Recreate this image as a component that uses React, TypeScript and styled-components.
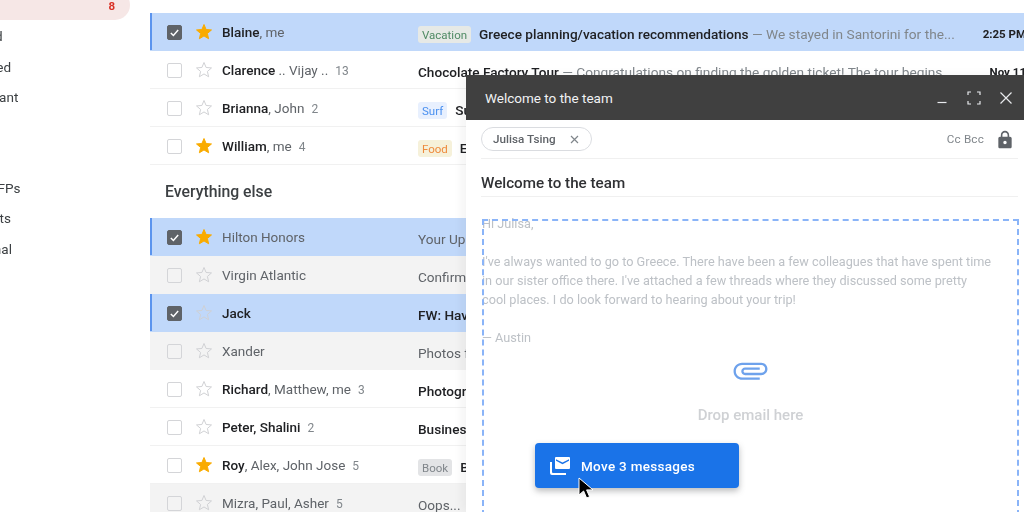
import React from 'react';
import styled, { createGlobalStyle } from 'styled-components';

const GlobalStyle = createGlobalStyle`
    html, body {
        margin: 0;
        height: 100%;
        background: #fff;
        overflow: hidden;
    }

    body {
        font-family: Roboto, "Liberation Sans", sans-serif;
        color: #202124;
    }
`;

const Page = styled.div`
    position: relative;
    display: flex;
    width: 1024px;
    height: 512px;
    overflow: hidden;
    filter: blur(0.35px);
`;

const Sidebar = styled.nav`
    flex: 0 0 130px;
    margin-right: 20px;
    margin-top: -10px;
    overflow: hidden;
    font-size: 13.5px;
    color: #3c4043;
`;

const InboxPill = styled.div`
    display: flex;
    align-items: flex-end;
    justify-content: flex-end;
    box-sizing: border-box;
    height: 30px;
    padding: 0 15px 7px 0;
    background: #f6e7e6;
    border-radius: 0 15px 15px 0;
    font-size: 11.5px;
    font-weight: 700;
    color: #d93025;
`;

const NavGroup = styled.div`
    padding-top: 1px;
    margin-bottom: 60px;
`;

const NavItem = styled.div`
    height: 30.5px;
    line-height: 30.5px;
    margin-left: -41px;
    white-space: nowrap;
`;

const Main = styled.main`
    flex: 1;
    min-width: 0;
    padding-top: 13px;
`;

const SectionTitle = styled.h2`
    display: flex;
    align-items: center;
    height: 53px;
    margin: 0;
    padding-left: 15px;
    font-size: 15.8px;
    font-weight: 500;
    color: #3c4043;
`;

const Row = styled.div<{ $tone: 'plain' | 'read' | 'selected' }>`
    display: flex;
    align-items: center;
    box-sizing: border-box;
    height: 38px;
    padding: 1px 0 0 17px;
    font-size: 13.5px;
    white-space: nowrap;
    background: ${({ $tone }) =>
        $tone === 'selected' ? '#c0d8fa' : $tone === 'read' ? '#f3f3f3' : '#fff'};
    border-bottom: 1px solid ${({ $tone }) => ($tone === 'plain' ? '#f1f1f1' : 'transparent')};
    box-shadow: ${({ $tone }) => ($tone === 'selected' ? 'inset 2px 0 0 #5b94ee' : 'none')};
`;

const Check = styled.span<{ $checked: boolean }>`
    display: flex;
    align-items: center;
    justify-content: center;
    box-sizing: border-box;
    flex: 0 0 15px;
    height: 15px;
    margin-right: 13px;
    border-radius: 2px;
    border: 1.5px solid ${({ $checked }) => ($checked ? '#5f6368' : '#d4d5d8')};
    background: ${({ $checked }) => ($checked ? '#5f6368' : 'transparent')};
`;

const StarIcon = styled.svg<{ $on: boolean }>`
    flex: 0 0 18px;
    width: 18px;
    height: 18px;
    margin-right: 9px;
    fill: ${({ $on }) => ($on ? '#f9ab00' : 'none')};
    stroke: ${({ $on }) => ($on ? '#f9ab00' : '#cfd0d3')};
    stroke-width: 1.3;
`;

const Sender = styled.span`
    flex: 0 0 196px;
    color: #5f6368;
`;

const Bold = styled.b`
    font-weight: 500;
    color: #202124;
`;

const Count = styled.span`
    margin-left: 7px;
    font-size: 12px;
    color: #80868b;
`;

const Tag = styled.span<{ $bg: string; $fg: string }>`
    display: inline-block;
    margin-right: 8px;
    padding: 0 4px;
    height: 17px;
    line-height: 18px;
    border-radius: 3px;
    font-size: 11.5px;
    background: ${({ $bg }) => $bg};
    color: ${({ $fg }) => $fg};
`;

const Content = styled.span`
    flex: 1;
    min-width: 0;
    position: relative;
    top: 2px;
    overflow: hidden;
    color: #5f6368;
`;

const Subject = styled.b<{ $strong: boolean }>`
    font-size: 13.6px;
    font-weight: ${({ $strong }) => ($strong ? 500 : 400)};
    color: ${({ $strong }) => ($strong ? '#202124' : '#5f6368')};
`;

const Preview = styled.span`
    font-size: 13.7px;
    color: #80868b;
`;

const Time = styled.span`
    flex: 0 0 44px;
    margin-right: -2px;
    position: relative;
    top: 2px;
    text-align: right;
    font-size: 11.5px;
    font-weight: 700;
    color: #202124;
`;

const Compose = styled.section`
    position: absolute;
    left: 466px;
    top: 75px;
    display: flex;
    flex-direction: column;
    width: 558px;
    height: 437px;
    background: #fff;
    box-shadow: -4px 0 10px rgba(0, 0, 0, 0.05);
`;

const ComposeHeader = styled.header`
    display: flex;
    align-items: center;
    flex: 0 0 45px;
    padding: 1px 8px 0 19px;
    box-sizing: border-box;
    background: #404040;
    color: #f1f3f4;
    font-size: 13.5px;
`;

const ComposeTitle = styled.span`
    flex: 1;
`;

const HeaderIcon = styled.svg`
    width: 20px;
    height: 20px;
    margin-left: 12px;
    fill: none;
    stroke: #e8eaed;
    stroke-width: 1.2;
`;

const ComposeBody = styled.div`
    position: relative;
    display: flex;
    flex-direction: column;
    flex: 1;
    padding: 0 6px 0 15px;
`;

const RecipientRow = styled.div`
    display: flex;
    align-items: center;
    height: 38px;
    padding-right: 3px;
    border-bottom: 1px solid #f0f0f0;
    font-size: 11.7px;
    color: #80868b;
`;

const Chip = styled.span`
    display: flex;
    align-items: center;
    box-sizing: border-box;
    width: 111px;
    height: 24px;
    padding-left: 11px;
    border: 1px solid #dadce0;
    border-radius: 12px;
    font-weight: 500;
    color: #5f6368;
`;

const ChipClose = styled.svg`
    width: 9px;
    height: 9px;
    margin-left: auto;
    margin-right: 12px;
    stroke: #80868b;
    stroke-width: 1.2;
`;

const CcBcc = styled.span`
    margin-left: auto;
    margin-right: 11px;
    letter-spacing: 0.2px;
`;

const LockIcon = styled.svg`
    width: 20px;
    height: 20px;
    margin-top: 1px;
    fill: #5f6368;
`;

const SubjectLine = styled.div`
    display: flex;
    align-items: center;
    box-sizing: border-box;
    height: 38px;
    padding-top: 10px;
    border-bottom: 1px solid #f0f0f0;
    font-size: 15.2px;
    font-weight: 500;
    color: #303134;
`;

const Letter = styled.div`
    padding-top: 16.5px;
    padding-left: 1px;
    width: 512px;
    font-size: 12.7px;
    line-height: 19px;
    color: #bdc1c6;
`;

const LetterPara = styled.p`
    margin: 0 0 19px;
`;

const DropZone = styled.div`
    position: absolute;
    left: 16px;
    top: 99px;
    right: 5px;
    bottom: -4px;
    display: flex;
    flex-direction: column;
    align-items: center;
    padding-top: 131px;
    border: 2px dashed #8ab4f8;
    box-sizing: border-box;
`;

const ClipIcon = styled.svg`
    width: 37px;
    height: 37px;
    fill: #6ea2ec;
    transform: rotate(90deg);
`;

const DropLabel = styled.div`
    margin-top: 17px;
    font-size: 15px;
    font-weight: 500;
    color: #cfd1d4;
`;

const DragChip = styled.div`
    position: absolute;
    left: 535px;
    top: 443px;
    display: flex;
    align-items: center;
    box-sizing: border-box;
    width: 204px;
    height: 45px;
    padding-left: 14px;
    border-radius: 4px;
    background: #1a73e8;
    box-shadow: 0 3px 6px rgba(60, 64, 67, 0.35);
    color: #fff;
    font-size: 13.5px;
    font-weight: 500;
    letter-spacing: 0.3px;
`;

const DragIcon = styled.svg`
    width: 21px;
    height: 20px;
    margin-right: 11px;
    fill: #fff;
`;

const Cursor = styled.svg`
    position: absolute;
    left: 577px;
    top: 476px;
    width: 20px;
    height: 26px;
`;

type Mail = {
    checked?: boolean;
    star?: boolean;
    tone?: 'plain' | 'read' | 'selected';
    bold?: string;
    rest?: string;
    count?: number;
    tag?: [string, string, string];
    subject: string;
    strong?: boolean;
    preview?: string;
    time?: string;
};

const important: Mail[] = [
    {
        checked: true,
        star: true,
        tone: 'selected',
        bold: 'Blaine',
        rest: ', me',
        tag: ['Vacation', '#e6e9e6', '#4f8a64'],
        subject: 'Greece planning/vacation recommendations',
        strong: true,
        preview: ' — We stayed in Santorini for the...',
        time: '2:25 PM',
    },
    {
        bold: 'Clarence',
        rest: ' .. Vijay ..',
        count: 13,
        subject: 'Chocolate Factory Tour',
        strong: true,
        preview: ' — Congratulations on finding the golden ticket! The tour begins',
        time: 'Nov 11',
    },
    {
        bold: 'Brianna',
        rest: ', John',
        count: 2,
        tag: ['Surf', '#e8f0fe', '#4a90f0'],
        subject: 'Surf lessons',
        strong: true,
    },
    {
        star: true,
        bold: 'William',
        rest: ', me',
        count: 4,
        tag: ['Food', '#f6f1da', '#ee8a3c'],
        subject: 'Eats this weekend',
        strong: true,
    },
];

const others: Mail[] = [
    { checked: true, star: true, tone: 'selected', rest: 'Hilton Honors', subject: 'Your Upcoming Stay' },
    { tone: 'read', rest: 'Virgin Atlantic', subject: 'Confirmation' },
    { checked: true, tone: 'selected', bold: 'Jack', subject: 'FW: Have a look', strong: true },
    { tone: 'read', rest: 'Xander', subject: 'Photos from the trip' },
    { bold: 'Richard', rest: ', Matthew, me', count: 3, subject: 'Photography class', strong: true },
    { bold: 'Peter, Shalini', count: 2, subject: 'Business review', strong: true },
    {
        star: true,
        bold: 'Roy',
        rest: ', Alex, John Jose',
        count: 5,
        tag: ['Book', '#e3e4e6', '#80868b'],
        subject: 'Book club',
        strong: true,
    },
    { tone: 'read', rest: 'Mizra, Paul, Asher', count: 5, subject: 'Oops... ' },
];

const MailRow = ({ mail }: { mail: Mail }) => (
    <Row $tone={mail.tone ?? 'plain'}>
        <Check $checked={!!mail.checked}>
            {mail.checked && (
                <svg width="11" height="11" viewBox="0 0 12 12" fill="none" stroke="#fff" strokeWidth="1.6">
                    <path d="M2 6.5l2.8 2.8L10 3.2" />
                </svg>
            )}
        </Check>
        <StarIcon $on={!!mail.star} viewBox="0 0 24 24">
            <path d="M12 17.27L18.18 21l-1.64-7.03L22 9.24l-7.19-.61L12 2 9.19 8.63 2 9.24l5.46 4.73L5.82 21z" />
        </StarIcon>
        <Sender>
            {mail.bold && <Bold>{mail.bold}</Bold>}
            {mail.rest}
            {mail.count && <Count>{mail.count}</Count>}
        </Sender>
        <Content>
            {mail.tag && (
                <Tag $bg={mail.tag[1]} $fg={mail.tag[2]}>
                    {mail.tag[0]}
                </Tag>
            )}
            <Subject $strong={!!mail.strong}>{mail.subject}</Subject>
            {mail.preview && <Preview>{mail.preview}</Preview>}
        </Content>
        {mail.time && <Time>{mail.time}</Time>}
    </Row>
);

export default function App() {
    return (
        <Page>
            <GlobalStyle />
            <Sidebar>
                <InboxPill>8</InboxPill>
                <NavGroup>
                    <NavItem>Starred</NavItem>
                    <NavItem>Snoozed</NavItem>
                    <NavItem>Important</NavItem>
                </NavGroup>
                <NavItem>New RFPs</NavItem>
                <NavItem>Receipts</NavItem>
                <NavItem>Personal</NavItem>
            </Sidebar>
            <Main>
                {important.map(mail => (
                    <MailRow key={mail.subject} mail={mail} />
                ))}
                <SectionTitle>Everything else</SectionTitle>
                {others.map(mail => (
                    <MailRow key={mail.subject} mail={mail} />
                ))}
            </Main>
            <Compose>
                <ComposeHeader>
                    <ComposeTitle>Welcome to the team</ComposeTitle>
                    <HeaderIcon viewBox="0 0 20 20">
                        <path d="M5.5 14.5h9" />
                    </HeaderIcon>
                    <HeaderIcon viewBox="0 0 20 20">
                        <path d="M4 7V4h3M13 4h3v3M16 13v3h-3M7 16H4v-3" />
                    </HeaderIcon>
                    <HeaderIcon viewBox="0 0 20 20">
                        <path d="M4.5 4.5l11 11M15.5 4.5l-11 11" />
                    </HeaderIcon>
                </ComposeHeader>
                <ComposeBody>
                    <RecipientRow>
                        <Chip>
                            Julisa Tsing
                            <ChipClose viewBox="0 0 9 9">
                                <path d="M1 1l7 7M8 1L1 8" />
                            </ChipClose>
                        </Chip>
                        <CcBcc>Cc Bcc</CcBcc>
                        <LockIcon viewBox="0 0 24 24">
                            <path d="M18 8h-1V6c0-2.76-2.24-5-5-5S7 3.24 7 6v2H6c-1.1 0-2 .9-2 2v10c0 1.1.9 2 2 2h12c1.1 0 2-.9 2-2V10c0-1.1-.9-2-2-2zm-6 9c-1.1 0-2-.9-2-2s.9-2 2-2 2 .9 2 2-.9 2-2 2zm3.1-9H8.9V6c0-1.71 1.39-3.1 3.1-3.1 1.71 0 3.1 1.39 3.1 3.1v2z" />
                        </LockIcon>
                    </RecipientRow>
                    <SubjectLine>Welcome to the team</SubjectLine>
                    <Letter>
                        <LetterPara>Hi Julisa,</LetterPara>
                        <LetterPara>
                            I've always wanted to go to Greece. There have been a few colleagues that have spent time
                            in our sister office there. I've attached a few threads where they discussed some pretty
                            cool places. I do look forward to hearing about your trip!
                        </LetterPara>
                        <LetterPara>— Austin</LetterPara>
                    </Letter>
                    <DropZone>
                        <ClipIcon viewBox="0 0 24 24">
                            <path d="M16.5 6v11.5c0 2.21-1.79 4-4 4s-4-1.79-4-4V5c0-1.38 1.12-2.5 2.5-2.5s2.5 1.12 2.5 2.5v10.5c0 .55-.45 1-1 1s-1-.45-1-1V6H10v9.5c0 1.38 1.12 2.5 2.5 2.5s2.5-1.12 2.5-2.5V5c0-2.21-1.79-4-4-4S7 2.79 7 5v12.5c0 3.04 2.46 5.5 5.5 5.5s5.5-2.46 5.5-5.5V6h-1.5z" />
                        </ClipIcon>
                        <DropLabel>Drop email here</DropLabel>
                    </DropZone>
                </ComposeBody>
            </Compose>
            <DragChip>
                <DragIcon viewBox="0 0 21 20">
                    <path d="M7 1h13a1 1 0 0 1 1 1v10a1 1 0 0 1-1 1H7a1 1 0 0 1-1-1V2a1 1 0 0 1 1-1zm0 2.2v1.6l6.5 3.4L20 4.8V3.2l-6.5 3.4L7 3.2z" />
                    <path d="M1 6h2v10a1 1 0 0 0 1 1h13v2H3a2 2 0 0 1-2-2V6z" />
                </DragIcon>
                Move 3 messages
            </DragChip>
            <Cursor viewBox="0 0 20 26">
                <path d="M2 2v17l4.6-4 3 7 3-1.3-3-6.8H16z" fill="#000" stroke="#fff" strokeWidth="1" />
            </Cursor>
        </Page>
    );
}
